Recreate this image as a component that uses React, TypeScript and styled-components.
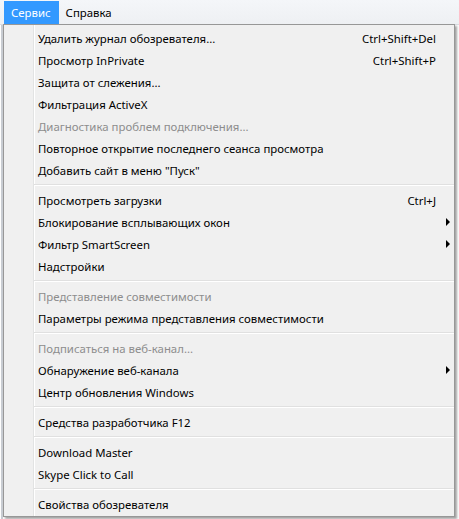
import React from 'react';
import styled, { createGlobalStyle } from 'styled-components';

const GlobalStyle = createGlobalStyle`
  html, body {
    margin: 0;
    padding: 0;
    overflow: hidden;
  }
  body {
    font-family: 'Noto Sans', 'Open Sans', 'DejaVu Sans', sans-serif;
    font-size: 11.4px;
    color: #000;
  }
`;

const Page = styled.div`
  position: relative;
  width: 459px;
  height: 519px;
  background: #fdfdfd;
  overflow: hidden;
`;

const MenuBar = styled.div`
  display: flex;
  align-items: stretch;
  height: 23px;
  padding: 1px 0 0 4px;
  background: linear-gradient(to bottom, #f4f6f9, #eef0f3);
  border-bottom: 1px solid #d9dce1;
`;

const BarItem = styled.div<{ $active?: boolean }>`
  display: flex;
  align-items: center;
  padding: 0 8px 0 7px;
  background: ${p => (p.$active ? '#3399ff' : 'transparent')};
  color: ${p => (p.$active ? '#fff' : '#000')};
`;

const PageBody = styled.div`
  height: 495px;
  border-left: 2px solid #c8ccd2;
  margin-left: 1px;
`;

const Popup = styled.div`
  position: absolute;
  top: 24px;
  left: 3px;
  width: 450px;
  padding: 2px 0 1px;
  background:
    linear-gradient(to right, transparent 29px, #e2e3e3 29px, #e2e3e3 30px, #ffffff 30px, #ffffff 31px, transparent 31px),
    #f0f0f0;
  border: 1px solid #979797;
  box-shadow: 2px 2px 2px rgba(0, 0, 0, 0.35);
`;

const Item = styled.div<{ $disabled?: boolean }>`
  display: grid;
  grid-template-columns: 1fr auto 18px;
  align-items: center;
  height: 22px;
  padding-left: 34px;
  color: ${p => (p.$disabled ? '#8d8d8d' : '#000')};
  white-space: nowrap;
`;

const Shortcut = styled.span`
  text-align: right;
`;

const Arrow = styled.span`
  justify-self: center;
  width: 0;
  height: 0;
  margin-left: 6px;
  border-top: 4px solid transparent;
  border-bottom: 4px solid transparent;
  border-left: 4px solid #000;
`;

const Separator = styled.div`
  height: 8px;
  display: flex;
  align-items: center;
  padding-left: 30px;

  &::before {
    content: '';
    flex: 1;
    height: 1px;
    border-top: 1px solid #e0e0e0;
    background: #ffffff;
  }
`;

type Entry =
  | { label: string; shortcut?: string; submenu?: boolean; disabled?: boolean }
  | 'sep';

const entries: Entry[] = [
  { label: 'Удалить журнал обозревателя...', shortcut: 'Ctrl+Shift+Del' },
  { label: 'Просмотр InPrivate', shortcut: 'Ctrl+Shift+P' },
  { label: 'Защита от слежения...' },
  { label: 'Фильтрация ActiveX' },
  { label: 'Диагностика проблем подключения...', disabled: true },
  { label: 'Повторное открытие последнего сеанса просмотра' },
  { label: 'Добавить сайт в меню "Пуск"' },
  'sep',
  { label: 'Просмотреть загрузки', shortcut: 'Ctrl+J' },
  { label: 'Блокирование всплывающих окон', submenu: true },
  { label: 'Фильтр SmartScreen', submenu: true },
  { label: 'Надстройки' },
  'sep',
  { label: 'Представление совместимости', disabled: true },
  { label: 'Параметры режима представления совместимости' },
  'sep',
  { label: 'Подписаться на веб-канал...', disabled: true },
  { label: 'Обнаружение веб-канала', submenu: true },
  { label: 'Центр обновления Windows' },
  'sep',
  { label: 'Средства разработчика F12' },
  'sep',
  { label: 'Download Master' },
  { label: 'Skype Click to Call' },
  'sep',
  { label: 'Свойства обозревателя' },
];

export default function App(): JSX.Element {
  return (
    <Page>
      <GlobalStyle />
      <MenuBar>
        <BarItem $active>Сервис</BarItem>
        <BarItem>Справка</BarItem>
      </MenuBar>
      <PageBody />
      <Popup>
        {entries.map((e, i) =>
          e === 'sep' ? (
            <Separator key={i} />
          ) : (
            <Item key={i} $disabled={e.disabled}>
              <span>{e.label}</span>
              <Shortcut>{e.shortcut}</Shortcut>
              {e.submenu ? <Arrow /> : <span />}
            </Item>
          ),
        )}
      </Popup>
    </Page>
  );
}
